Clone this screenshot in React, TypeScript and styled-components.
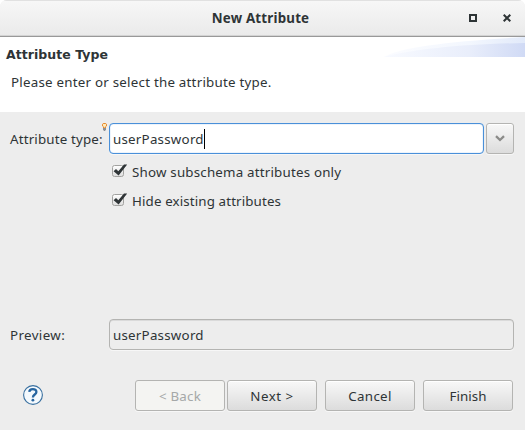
import React from 'react';
import styled, { createGlobalStyle } from 'styled-components';

const GlobalStyle = createGlobalStyle`
  * { box-sizing: border-box; }
  body { margin: 0; background: #fff; overflow: hidden; }
`;

const Dialog = styled.div`
  width: 525px;
  height: 430px;
  display: flex;
  flex-direction: column;
  background: #ededed;
  border-radius: 7px 7px 0 0;
  overflow: hidden;
  font-family: 'Noto Sans', 'Open Sans', sans-serif;
  font-size: 13.33px;
  color: #2e3436;
  white-space: nowrap;
`;

const TitleBar = styled.header`
  height: 37px;
  flex: none;
  display: grid;
  grid-template-columns: 1fr auto 1fr;
  align-items: center;
  background: linear-gradient(#f7f7f7, #eaeaea);
  border-top: 1px solid #e1e1e1;
  border-bottom: 1px solid #999;
  box-shadow: inset 0 -1px #d3d3d3;
`;

const Title = styled.h1<{ $spacing: number }>`
  grid-column: 2;
  margin: 0 4px 2px 0;
  font-size: 13.33px;
  line-height: 18px;
  font-weight: 700;
  letter-spacing: ${p => p.$spacing}px;
`;

const WindowControls = styled.div`
  display: flex;
  justify-content: flex-end;
  gap: 26px;
  padding: 0 14px 2px 0;
  svg { display: block; }
`;

const Banner = styled.section`
  height: 75px;
  flex: none;
  display: flex;
  justify-content: space-between;
  background: #fff;
`;

const BannerText = styled.div`
  padding: 10px 0 0 6px;
`;

const Heading = styled.h2`
  margin: 0;
  font: 700 12.5px/16px 'DejaVu Sans', sans-serif;
  letter-spacing: 0.05px;
`;

const Description = styled.p`
  margin: 10px 0 0 5px;
  line-height: 18px;
`;

const Text = styled.span<{ $spacing?: number }>`
  line-height: 18px;
  letter-spacing: ${p => p.$spacing ?? 0}px;
`;

const Form = styled.main`
  height: 239px;
  flex: none;
  display: flex;
  flex-direction: column;
  padding: 11px 11px 0 10px;
`;

const FieldRow = styled.div`
  display: flex;
  align-items: center;
  height: 31px;
`;

const FieldLabel = styled.label`
  width: 99px;
  height: 31px;
  display: flex;
  align-items: center;
  span { min-width: 0; }
  svg { flex: none; align-self: flex-start; margin-left: auto; margin-right: 2px; }
`;

const Field = styled.div<{ $active?: boolean }>`
  flex: 1;
  height: 31px;
  display: flex;
  align-items: center;
  padding-left: 3px;
  border: 1px solid ${p => (p.$active ? '#4a90d9' : '#b4b4b2')};
  border-radius: 4px;
  background: ${p => (p.$active ? '#fff' : '#ededed')};
  box-shadow: ${p => (p.$active ? 'inset 0 0 1px #4a90d9, 0 1px #f7f7f7' : 'inset 0 1px #dadada, 0 1px #f7f7f7')};
`;

const Caret = styled.i`
  width: 1px;
  height: 20px;
  background: #000;
`;

const Button = styled.button<{ $width: number }>`
  width: ${p => p.$width}px;
  height: 31px;
  padding: 0;
  display: flex;
  align-items: center;
  justify-content: center;
  border: 1px solid #b4b4b2;
  border-radius: 3px;
  background: linear-gradient(#f8f8f8, #dcdcdc);
  box-shadow: inset 0 1px #fff, 0 1px #f7f7f7;
  font: inherit;
  color: #2e3436;
  &:disabled {
    background: #f4f4f2;
    color: #a5a8a8;
    box-shadow: 0 1px #f7f7f7;
  }
`;

const DropButton = styled(Button)`
  margin-left: 2px;
  padding-bottom: 1px;
`;

const Checks = styled.div`
  display: flex;
  flex-direction: column;
  gap: 11px;
  padding: 9px 0 0 102px;
`;

const CheckLabel = styled.label`
  display: flex;
  height: 18px;
  gap: 4px;
  svg { flex: none; }
`;

const PreviewRow = styled(FieldRow)`
  margin-top: 109px;
`;

const Footer = styled.footer`
  flex: 1;
  display: flex;
  align-items: flex-start;
  padding: 29px 12px 0 23px;
`;

const HelpIcon = styled.svg`
  margin: 5px auto 0 0;
`;

const Actions = styled.div`
  display: flex;
  gap: 8px;
`;

const StepActions = styled.div`
  display: flex;
  gap: 2px;
`;

function Check() {
  return (
    <svg width="16" height="16" viewBox="0 0 16 16">
      <defs>
        <linearGradient id="box" x2="0" y2="1">
          <stop stopColor="#fff" />
          <stop offset="1" stopColor="#ddd" />
        </linearGradient>
      </defs>
      <rect x=".5" y="2.5" width="11" height="11" rx="2" fill="url(#box)" stroke="#a2a2a0" />
      <path d="M1.6 8.2 4 6 6.3 8.3 12 1.5H15.2L6.6 12.5Z" fill="#2e3436" />
    </svg>
  );
}

function Swoosh() {
  return (
    <svg width="141" height="20" viewBox="0 0 141 20">
      <defs>
        <linearGradient id="outer">
          <stop stopColor="#fbfcff" />
          <stop offset=".6" stopColor="#f3f7fe" />
          <stop offset="1" stopColor="#e2eafa" />
        </linearGradient>
        <linearGradient id="inner">
          <stop stopColor="#f8faff" />
          <stop offset=".6" stopColor="#e9eefb" />
          <stop offset="1" stopColor="#d0daf5" />
        </linearGradient>
      </defs>
      <path d="M0 20C15 10 70 4 141 0V20Z" fill="url(#outer)" />
      <path d="M0 20C30 12 80 7 141 6V20Z" fill="url(#inner)" />
    </svg>
  );
}

export default function App() {
  return (
    <>
      <GlobalStyle />
      <Dialog>
        <TitleBar>
          <Title $spacing={0.2}>New Attribute</Title>
          <WindowControls>
            <svg width="8" height="8" viewBox="0 0 8 8">
              <path d="M1 1H7V7H1Z" fill="none" stroke="#2e3436" strokeWidth="2" />
            </svg>
            <svg width="8" height="8" viewBox="0 0 8 8">
              <path d="M.7.7 7.3 7.3M7.3.7.7 7.3" stroke="#2e3436" strokeWidth="2" />
            </svg>
          </WindowControls>
        </TitleBar>
        <Banner>
          <BannerText>
            <Heading>Attribute Type</Heading>
            <Description><Text $spacing={0.235}>Please enter or select the attribute type.</Text></Description>
          </BannerText>
          <Swoosh />
        </Banner>
        <Form>
          <FieldRow>
            <FieldLabel>
              <Text $spacing={0.17}>Attribute type:</Text>
              <svg width="5" height="8" viewBox="0 0 5 8">
                <path d="M1.5 5V3.8L.5 3V1.2L1.2.5H3.8L4.5 1.2V3L3.5 3.8V5Z" fill="#ffe9b8" stroke="#e8892b" />
                <path d="M1 5H4V6.6L3 8H2L1 6.6Z" fill="#8b8f94" />
              </svg>
            </FieldLabel>
            <Field $active><Text $spacing={0.24}>userPassword</Text><Caret /></Field>
            <DropButton $width={28}>
              <svg width="10" height="7" viewBox="0 0 10 7">
                <path d="M1 1.2 5 5 9 1.2" fill="none" stroke="#8b8b89" strokeWidth="2.3" />
              </svg>
            </DropButton>
          </FieldRow>
          <Checks>
            <CheckLabel><Check /><Text $spacing={0.2}>Show subschema attributes only</Text></CheckLabel>
            <CheckLabel><Check /><Text $spacing={0.13}>Hide existing attributes</Text></CheckLabel>
          </Checks>
          <PreviewRow>
            <FieldLabel><Text $spacing={0.38}>Preview:</Text></FieldLabel>
            <Field><Text $spacing={0.24}>userPassword</Text></Field>
          </PreviewRow>
        </Form>
        <Footer>
          <HelpIcon width="20" height="20" viewBox="0 0 20 20">
            <circle cx="10" cy="10" r="9.4" fill="#f4f9fd" stroke="#386f9f" strokeWidth="1.1" />
            <path d="M6.3 6.9C6.4 3.2 13.4 3.1 13.4 6.9C13.4 9.6 9.9 9.4 9.9 12.5" fill="none" stroke="#2765a0" strokeWidth="2.3" />
            <circle cx="9.9" cy="15.2" r="1.4" fill="#2765a0" />
          </HelpIcon>
          <Actions>
            <StepActions>
              <Button $width={90} disabled><Text $spacing={0.2}>&lt; Back</Text></Button>
              <Button $width={90}><Text $spacing={0.5}>Next &gt;</Text></Button>
            </StepActions>
            <Button $width={90}><Text $spacing={0.3}>Cancel</Text></Button>
            <Button $width={90}><Text $spacing={0.05}>Finish</Text></Button>
          </Actions>
        </Footer>
      </Dialog>
    </>
  );
}
